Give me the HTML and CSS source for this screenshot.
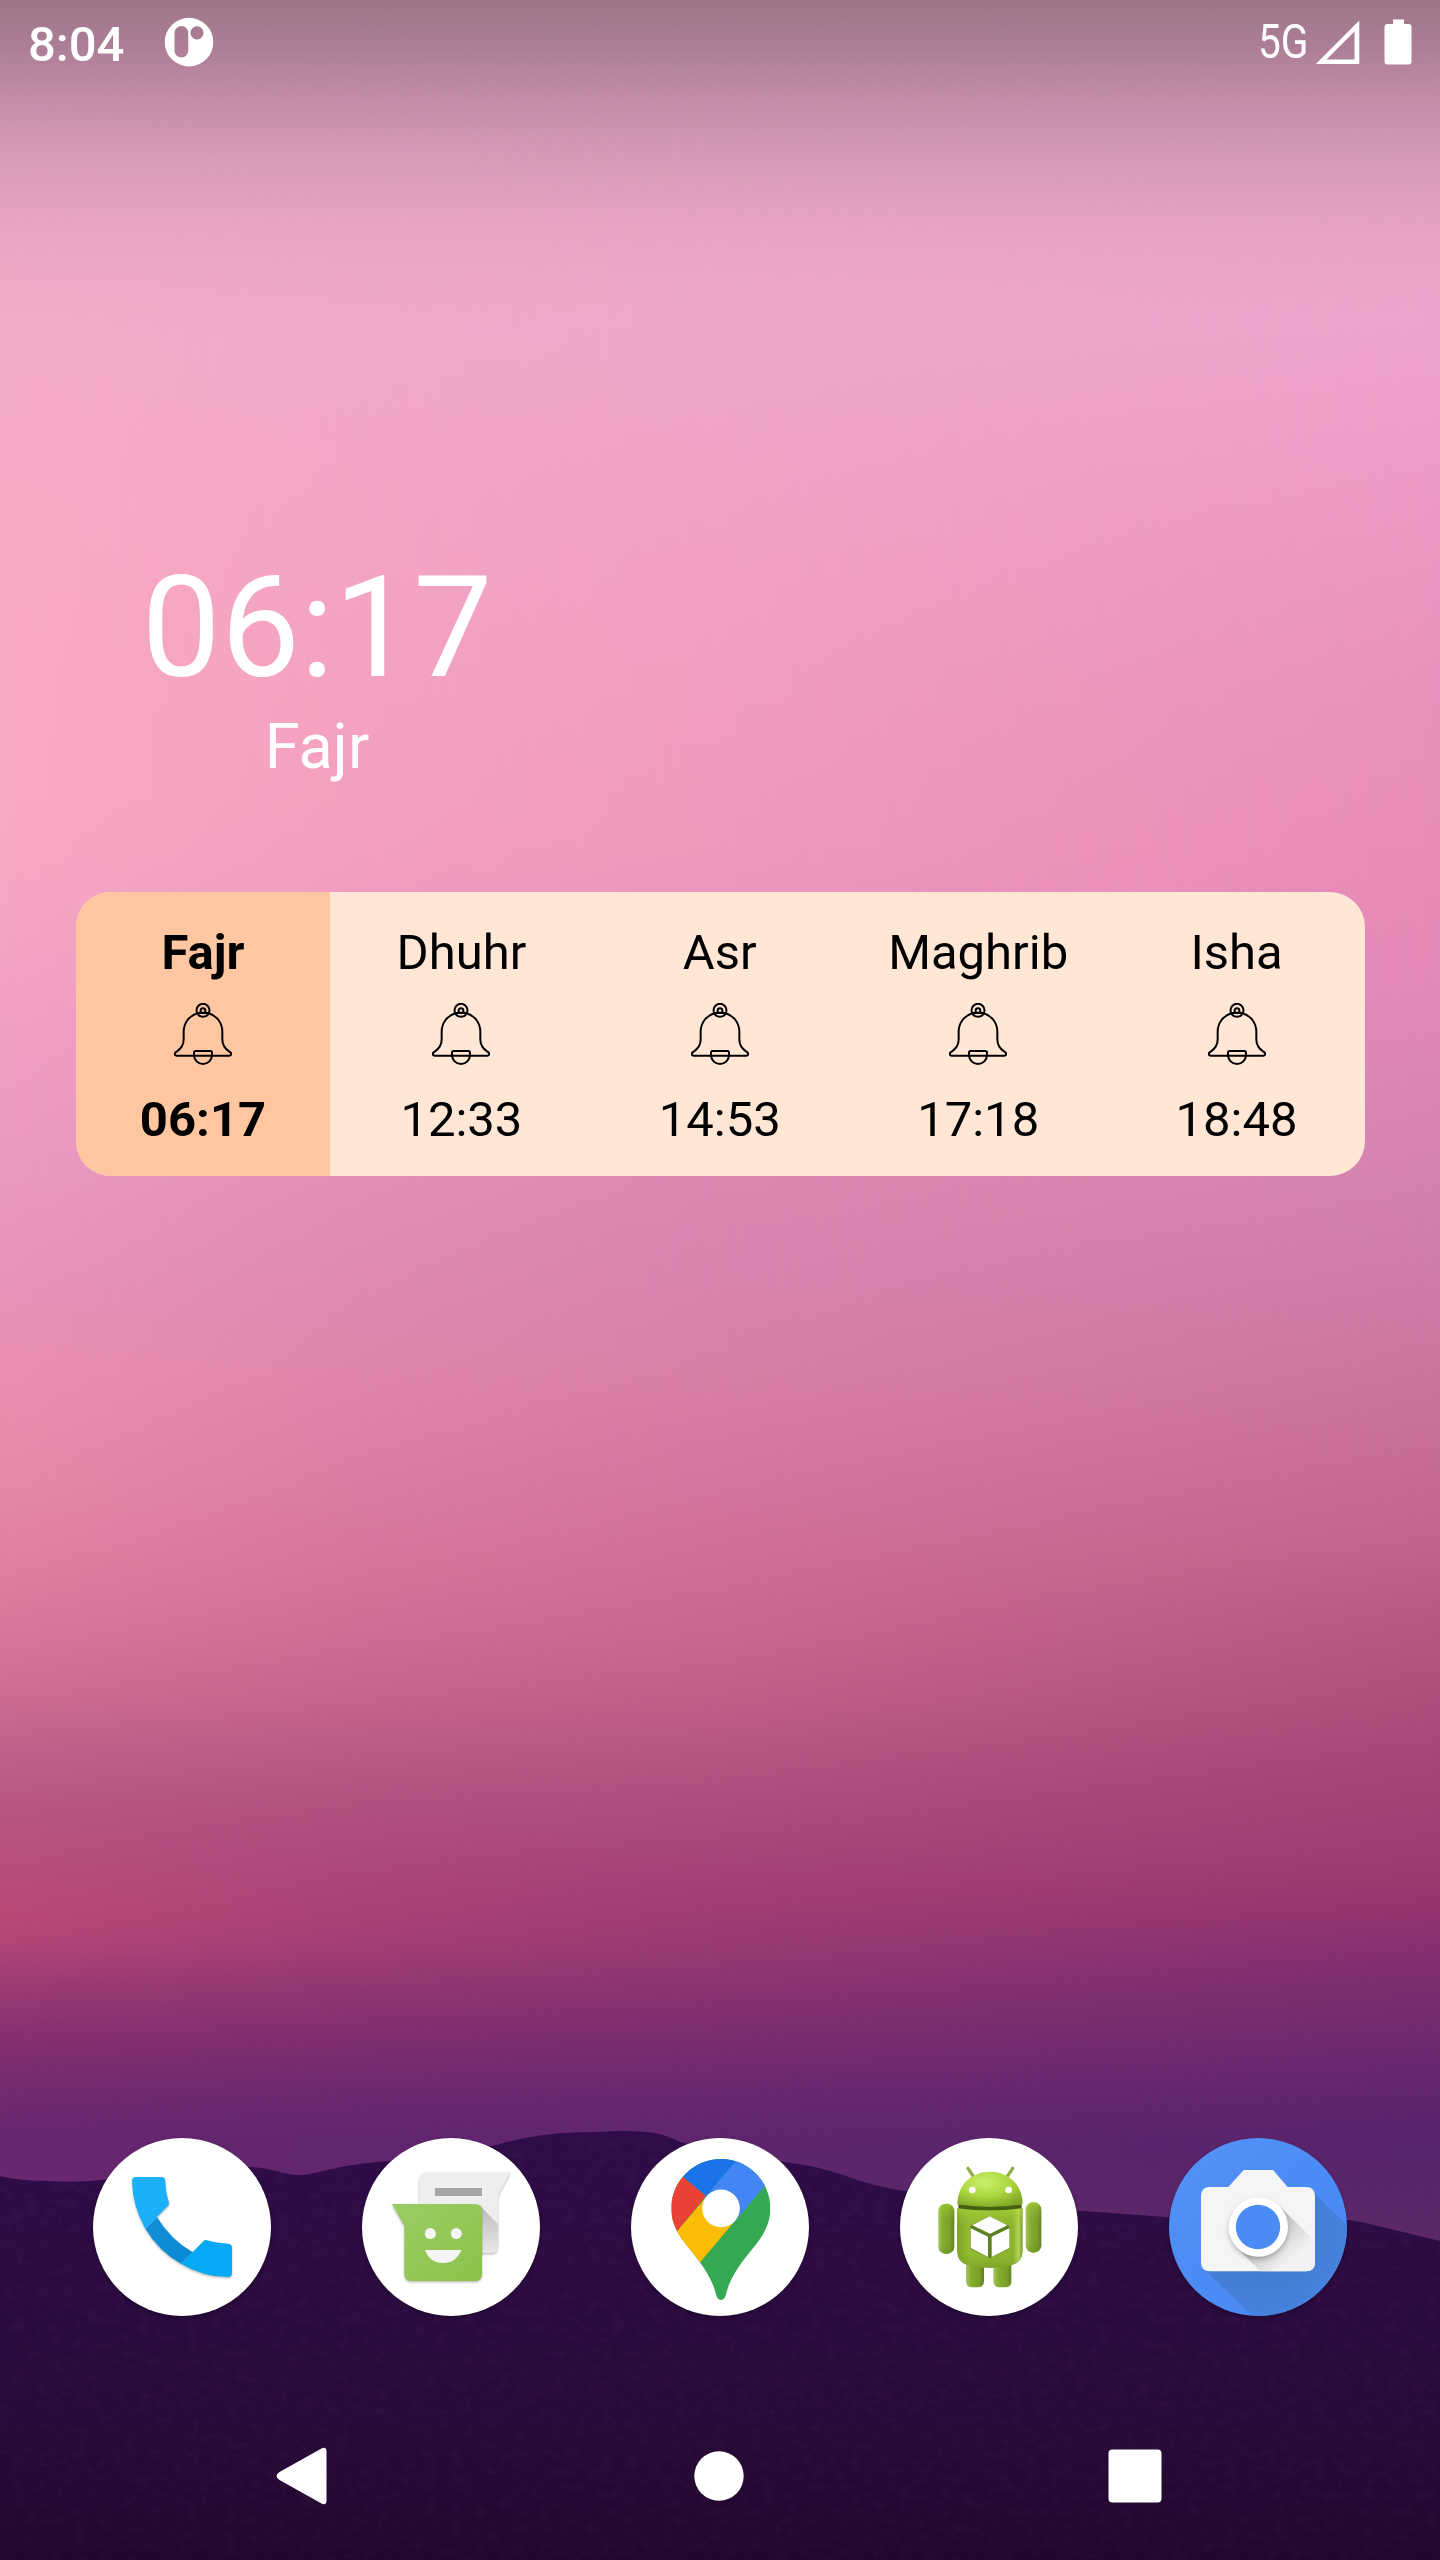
FILE: index.html
```html
<!DOCTYPE html>
<html lang="en">
<head>
<meta charset="utf-8">
<title>Home screen</title>
<link rel="stylesheet" href="styles.css">
</head>
<body>
<svg class="defs" width="0" height="0" aria-hidden="true">
  <symbol id="bell" viewBox="0 0 174 186">
    <g fill="none" stroke="#000" stroke-width="6" stroke-linejoin="round">
      <circle cx="87" cy="22" r="19.500"/>
      <path d="M80 29v-6a7 7 0 0 1 14 0v6z"/>
      <path d="M72 30h30C127 37 145 58 145 87v22c0 18 8 28 20 36 12 7 6 13 1 13H8c-5 0-11-6 1-13 12-8 20-18 20-36V87C29 58 47 37 72 30z"/>
      <path d="M65 144h44q5 0 5 5v7a27 27 0 0 1-54 0v-7q0-5 5-5z"/>
    </g>
  </symbol>
</svg>
<div class="screen">
  <div class="wallpaper">
    <div class="sky sky-left"></div>
    <div class="sky sky-right"></div>
    <svg class="hills" width="1440" height="440" viewBox="0 2120 1440 440">
      <defs>
        <linearGradient id="hill" x1="0" y1="0" x2="0" y2="1">
          <stop offset="0" stop-color="#2e0c48"/><stop offset=".5" stop-color="#2a0b3e"/><stop offset=".75" stop-color="#260a36"/><stop offset="1" stop-color="#21062c"/>
        </linearGradient>
        <filter id="grain" x="0" y="0" width="100%" height="100%">
          <feTurbulence type="fractalNoise" baseFrequency=".08 .12" numOctaves="3" seed="4"/>
          <feColorMatrix values="0 0 0 0 .38  0 0 0 0 .1  0 0 0 0 .38  .9 0 0 0 -.38"/>
          <feComposite in2="SourceGraphic" operator="in"/>
        </filter>
        <path id="ridge" d="M0 2176Q20 2181 50 2181Q80 2183 110 2179C160 2176 210 2166 250 2167C275 2168 285 2176 303 2175C325 2172 335 2165 390 2161Q440 2158 500 2144Q540 2132 597 2132Q625 2130 647 2132C665 2133 675 2141 690 2145C740 2152 760 2160 799 2164C840 2170 860 2185 905 2191C970 2204 1020 2208 1084 2211L1166 2217Q1270 2222 1340 2219Q1360 2221 1378 2226L1440 2241V2560H0z"/>
      </defs>
      <use href="#ridge" fill="url(#hill)"/>
      <use href="#ridge" filter="url(#grain)" opacity=".14"/>
    </svg>
  </div>

  <header class="status">
    <div class="status-left">
      <span class="status-time">8:04</span>
      <svg class="notif" width="50" height="50" viewBox="0 0 50 50"><path fill="#fff" fill-rule="evenodd" d="M25 .8a24.300 24.300 0 1 0 0 48.600 24.300 24.300 0 0 0 0-48.600zM10.500 16a6.900 6.900 0 0 1 13.800 0v17.500a6.900 6.900 0 0 1-13.800 0zM33 9.200a6.600 6.600 0 1 1 0 13.200 6.600 6.600 0 0 1 0-13.200z"/></svg>
    </div>
    <div class="status-right">
      <span class="network">5G</span>
      <svg class="signal" width="45" height="45" viewBox="0 0 45 45"><path fill="#fff" fill-rule="evenodd" d="M44.300.5v43.500H.8zM39.500 11.500 11.500 39.500h28z"/></svg>
      <svg class="battery" width="28" height="46" viewBox="0 0 28 46"><path fill="#fff" d="M9 .5h11V5h4.500q3 0 3 3v34.500q0 3-3 3h-21q-3 0-3-3V8q0-3 3-3H9z"/></svg>
    </div>
  </header>

  <main class="home">
    <section class="next">
      <div class="next-time">06:17</div>
      <div class="next-name">Fajr</div>
    </section>
    <section class="prayers">
      <div class="prayer current"><span class="name">Fajr</span><svg class="bell"><use href="#bell"/></svg><span class="time">06:17</span></div>
      <div class="prayer"><span class="name">Dhuhr</span><svg class="bell"><use href="#bell"/></svg><span class="time">12:33</span></div>
      <div class="prayer"><span class="name">Asr</span><svg class="bell"><use href="#bell"/></svg><span class="time">14:53</span></div>
      <div class="prayer"><span class="name">Maghrib</span><svg class="bell"><use href="#bell"/></svg><span class="time">17:18</span></div>
      <div class="prayer"><span class="name">Isha</span><svg class="bell"><use href="#bell"/></svg><span class="time">18:48</span></div>
    </section>
  </main>

  <footer class="dock">
    <svg class="app" viewBox="39 39 534 534">
      <defs>
        <linearGradient id="ph2" x1="0" y1="0" x2="1" y2="1"><stop offset="0" stop-color="#1590d8"/><stop offset="1" stop-color="#0688d4"/></linearGradient>
      </defs>
      <circle cx="306" cy="306" r="267" fill="#fff"/>
      <g class="glyph-shadow">
        <path fill="url(#ph2)" d="M231 276Q270 342 338 382L303 416Q236 378 196 311z"/>
        <path fill="#1bb0f8" d="M168 156h76q12 0 12 13 1 34 10 60 3 8-2 13L196 311Q158 245 156 168q0-12 12-12z"/>
        <path fill="#05a9f6" d="M371 348q4-4 10-2 28 9 64 10 11 1 11 12v76q0 12-12 12-77-1-141-40z"/>
      </g>
    </svg>
    <svg class="app" viewBox="36 39 534 534">
      <defs>
        <linearGradient id="ms" x1="0" y1="0" x2="1" y2="1"><stop offset="0" stop-color="#9ccc65"/><stop offset="1" stop-color="#8bc34a"/></linearGradient>
        <linearGradient id="fold" x1="0" y1="0" x2="0" y2="1"><stop offset="0" stop-color="#bbb"/><stop offset="1" stop-color="#e8e8e8"/></linearGradient>
      </defs>
      <circle cx="303" cy="306" r="267" fill="#fff"/>
      <g class="glyph-shadow">
        <path fill="#eee" d="M234 142h247l-37 68v152q0 22-22 22H230q-22 0-22-22V168q0-26 26-26z"/>
      </g>
      <path fill="url(#fold)" d="M390 242 444 297v65q0 22-22 22h-32z"/>
      <path fill="#a6a6a6" d="M255 189h141v24H255z"/>
      <g class="glyph-shadow">
        <path fill="url(#ms)" d="M126 237h248q22 0 22 22v187q0 22-22 22H185q-22 0-22-22V303z"/>
      </g>
      <circle cx="241" cy="325.500" r="16.500" fill="#f5f5f5"/><circle cx="319" cy="325.500" r="16.500" fill="#f5f5f5"/>
      <path fill="#f5f5f5" d="M225 375h109q-16 39-55 39t-54-39z"/>
    </svg>
    <svg class="app" viewBox="48 39 534 534">
      <defs><clipPath id="pin"><path d="M318 102c82 0 148 66 148 148 0 46-19 78-45 111-35 44-73 87-87 144-4 14-7 20-16 20s-12-6-16-20c-14-56-50-98-86-143-28-35-47-66-47-112 0-82 67-148 149-148z"/></clipPath></defs>
      <circle cx="315" cy="306" r="267" fill="#fff"/>
      <g clip-path="url(#pin)">
        <path fill="#34a853" d="M150 90h340v450H150z"/>
        <path fill="#fbbc04" d="M181 324 318 164 420 216 253 415 170 400z"/>
        <path fill="#ea4335" d="M206 156 273 213 185 320 130 330 150 110z"/>
        <path fill="#4285f4" d="M362 108 460 90 449 183 356 294 270 216z"/>
        <path fill="#1a73e8" d="M205 156 180 80H386L273 213z"/>
      </g>
      <circle cx="318" cy="250" r="56.500" fill="#fff"/>
    </svg>
    <svg class="app" viewBox="45 39 534 534">
      <defs>
        <radialGradient id="head" cx=".42" cy=".3" r=".75"><stop offset="0" stop-color="#cdf06c"/><stop offset=".55" stop-color="#a9d63c"/><stop offset="1" stop-color="#7fa526"/></radialGradient>
        <linearGradient id="torso"><stop offset="0" stop-color="#7fa32b"/><stop offset=".18" stop-color="#92ba31"/><stop offset=".85" stop-color="#8cb42e"/><stop offset=".94" stop-color="#b1d65a"/><stop offset="1" stop-color="#76982a"/></linearGradient>
        <linearGradient id="limb"><stop offset="0" stop-color="#a6c65c"/><stop offset=".3" stop-color="#86ac2e"/><stop offset=".75" stop-color="#7a9e2a"/><stop offset="1" stop-color="#62811f"/></linearGradient>
        <linearGradient id="shade" x1="0" y1="0" x2="0" y2="1"><stop offset="0" stop-color="#b4e03c" stop-opacity=".5"/><stop offset=".35" stop-color="#8fb52e" stop-opacity="0"/><stop offset=".8" stop-color="#5d7c1c" stop-opacity="0"/><stop offset="1" stop-color="#5d7c1c" stop-opacity=".3"/></linearGradient>
      </defs>
      <circle cx="312" cy="306" r="267" fill="#fff"/>
      <path d="M249 130l16 24M383 130l-16 24" stroke="#91ad49" stroke-width="10" stroke-linecap="round"/>
      <path fill="url(#limb)" d="M243 415h54v53q0 19-19 19h-16q-19 0-19-19z"/>
      <path fill="url(#limb)" d="M325 415h54v53q0 19-19 19h-16q-19 0-19-19z"/>
      <rect x="160" y="236" width="48" height="151" rx="22" fill="url(#limb)"/>
      <rect x="422" y="232" width="47" height="151" rx="22" fill="url(#limb)"/>
      <rect x="160" y="236" width="48" height="151" rx="22" fill="url(#shade)"/>
      <rect x="422" y="232" width="47" height="151" rx="22" fill="url(#shade)"/>
      <path fill="#465f13" d="M220 238h190v16q-95 12-190 0z"/>
      <path fill="url(#torso)" d="M216 250q98 13 197 0v128q0 32-30 42-68 18-137 0-30-10-30-42z"/>
      <path fill="url(#shade)" d="M216 250q98 13 197 0v128q0 32-30 42-68 18-137 0-30-10-30-42z"/>
      <path fill="url(#head)" d="M217 238c0-58 42-98 98-98s98 40 98 98q-98 16-196 0z"/>
      <circle cx="262" cy="195" r="10" fill="#fff"/><circle cx="371" cy="195" r="10" fill="#fff"/>
      <path fill="#5f8020" d="M256 303 314 274 373 303v68l-59 29-58-29z"/>
      <path fill="#fff" d="M262 301 314 274 367 301 315 326zM257 310 309 335v61L257 369zM373 310 320 335v61l53-27z"/>
    </svg>
    <svg class="app" viewBox="42 39 534 534">
      <defs>
        <radialGradient id="cs" gradientUnits="userSpaceOnUse" cx="309" cy="306" r="267"><stop offset=".4" stop-color="#3f73bf" stop-opacity=".7"/><stop offset="1" stop-color="#4480d8" stop-opacity=".8"/></radialGradient>
        <linearGradient id="cb" x1="0" y1="0" x2="1" y2="1"><stop offset="0" stop-color="#5593f6"/><stop offset=".5" stop-color="#4b8bf4"/></linearGradient>
        <linearGradient id="ls" gradientUnits="userSpaceOnUse" x1="330" y1="330" x2="400" y2="410"><stop offset="0" stop-color="#c4c4c4"/><stop offset="1" stop-color="#f2f2f2"/></linearGradient>
        <clipPath id="cc"><circle cx="309" cy="306" r="267"/></clipPath>
      </defs>
      <g clip-path="url(#cc)">
        <path fill="url(#cb)" d="M42 39h534v534H42z"/>
        <path fill="url(#cs)" d="M472 197 680 405V680H400L147 432z"/>
      </g>
      <path fill="#f5f5f5" d="M266 135h88l44 51h55q27 0 27 27v199q0 27-27 27H165q-27 0-27-27V213q0-27 27-27h55z"/>
      <path fill="url(#ls)" d="M373 243 480 348v64q0 27-27 27H316L247 369z"/>
      <circle class="lens" cx="310" cy="306" r="89" fill="#fff"/>
      <circle cx="309" cy="306" r="66.500" fill="#4b8bf4"/>
    </svg>
  </footer>

  <nav class="navbar">
    <svg width="60" height="60" viewBox="0 0 60 60"><path fill="#fff" d="M48.500 2.500q5-2.500 5 3v49q0 5.500-5 3L6.500 34q-6-4 0-8z"/></svg>
    <svg width="60" height="60" viewBox="0 0 60 60"><circle cx="30" cy="30" r="24.700" fill="#fff"/></svg>
    <svg width="60" height="60" viewBox="0 0 60 60"><rect x="3.500" y="3.500" width="53" height="53" rx="4" fill="#fff"/></svg>
  </nav>
</div>
</body>
</html>
```
FILE: styles.css
```css
body {
  margin: 0;
  font-family: Roboto, sans-serif;
  color: #000;
}
.defs { position: absolute; }
svg { display: block; flex: none; }
.screen {
  position: relative;
  isolation: isolate;
  display: flex;
  flex-direction: column;
  width: 1440px;
  height: 2560px;
  overflow: hidden;
}

/* Wallpaper: centre column of colour, with the lighter left and darker right blended over it */
.wallpaper {
  position: absolute;
  inset: 0;
  z-index: -1;
  background: linear-gradient(180deg, #9e7688 0, #ad7f97 50px, #c48daa 100px, #d79bba 160px, #e7a3c5 220px, #eea7ca 280px, #f0a7cc 330px, #f1a2c6 500px, #f19dc0 700px, #f099bd 850px, #eb92bd 950px, #e48cb8 1080px, #dc88b3 1180px, #d983af 1284px, #d87fa8 1376px, #d376a1 1474px, #ce6f98 1560px, #c86892 1633px, #bf5f8a 1700px, #b25583 1762px, #a84b7c 1829px, #a24076 1890px, #963a73 1951px, #86326f 2000px, #782b70 2049px, #672870 2098px, #5f266d 2140px, #5c276a 2240px);
}
.sky { position: absolute; inset: 0; }
.sky-left {
  background: linear-gradient(180deg, #9e7688 0, #ad7f97 50px, #c48daa 100px, #d89cb9 160px, #eba6c4 240px, #f4abc8 330px, #f7aac5 500px, #f8a9c2 650px, #f8a9c2 800px, #f5a6c3 900px, #f09fc4 1020px, #e999c0 1180px, #e791b9 1302px, #e98fb0 1376px, #e489a8 1486px, #df81a1 1560px, #d6779a 1633px, #cc6e92 1694px, #bd628c 1749px, #b65784 1804px, #b75080 1853px, #b94878 1915px, #b24578 1942px, #9c3d74 1982px, #86306f 2037px, #70296f 2098px, #662770 2140px, #692870 2180px);
  -webkit-mask-image: linear-gradient(90deg, #000, rgba(0, 0, 0, .4) 25%, transparent 50%);
  mask-image: linear-gradient(90deg, #000, rgba(0, 0, 0, .4) 25%, transparent 50%);
}
.sky-right {
  background: linear-gradient(180deg, #9e7688 0, #ad7f97 50px, #c48daa 100px, #d59abb 160px, #e8a3c7 240px, #efa4cd 320px, #ec9bc6 480px, #e890bc 700px, #e78cb8 850px, #e389b7 980px, #d985b3 1100px, #d382ae 1180px, #ce7ca8 1272px, #cc74a0 1364px, #c66c98 1455px, #be648e 1547px, #b55a85 1608px, #aa4f7c 1700px, #a04375 1792px, #9a3c70 1866px, #91346f 1915px, #802e70 1964px, #742b6e 2013px, #692870 2061px, #5d246c 2110px, #58246c 2145px, #5b2968 2240px);
  -webkit-mask-image: linear-gradient(270deg, #000, transparent 50%);
  mask-image: linear-gradient(270deg, #000, transparent 50%);
}
.hills { position: absolute; left: 0; bottom: 0; }

.status {
  display: flex;
  justify-content: space-between;
  height: 84px;
  color: #fff;
  font-size: 49px;
  line-height: 60px;
}
.status-left, .status-right { display: flex; align-items: flex-start; }
.status-left { padding: 15px 0 0 28px; }
.status-time { width: 136px; font-weight: 500; }
.notif { margin-top: 2px; }
.status-right { padding: 12px 28px 0 0; }
.network {
  width: 57px;
  transform: scaleX(.83);
  transform-origin: 0 0;
}
.signal { margin: 8px 0 0; }
.battery { margin: 7px 0 0 24px; }

.home { flex: 1; }
.next {
  width: 482px;
  padding: 464px 0 0 76px;
  color: #fff;
  text-align: center;
}
.next-time { font-size: 141px; line-height: 160px; }
.next-name { margin-top: 2px; font-size: 63px; line-height: 74px; }
.prayers {
  display: grid;
  grid-template-columns: repeat(5, 254px);
  column-gap: 4.4px;
  width: 1289px;
  height: 284px;
  margin: 108px 0 0 76px;
  border-radius: 35px;
  background: #ffe6d5;
  overflow: hidden;
}
.prayer {
  display: flex;
  flex-direction: column;
  align-items: center;
  padding-top: 32px;
  font-size: 49px;
  line-height: 58px;
}
.current { background: #ffc7a1; font-weight: 700; }
.bell { width: 58px; height: 62px; margin: 21px 0 26px; }

.dock {
  display: flex;
  justify-content: space-between;
  padding: 0 93px 76px;
}
.app {
  width: 178px;
  height: 178px;
  overflow: visible;
  filter: drop-shadow(0 2px 2px rgba(0, 0, 0, .3));
}
.glyph-shadow { filter: drop-shadow(0 4px 3px rgba(0, 0, 0, .28)); }
.lens { filter: drop-shadow(0 8px 8px rgba(0, 0, 0, .25)); }

.navbar {
  box-sizing: border-box;
  display: flex;
  justify-content: space-between;
  height: 168px;
  padding: 54px 275px 0 273px;
}
```
